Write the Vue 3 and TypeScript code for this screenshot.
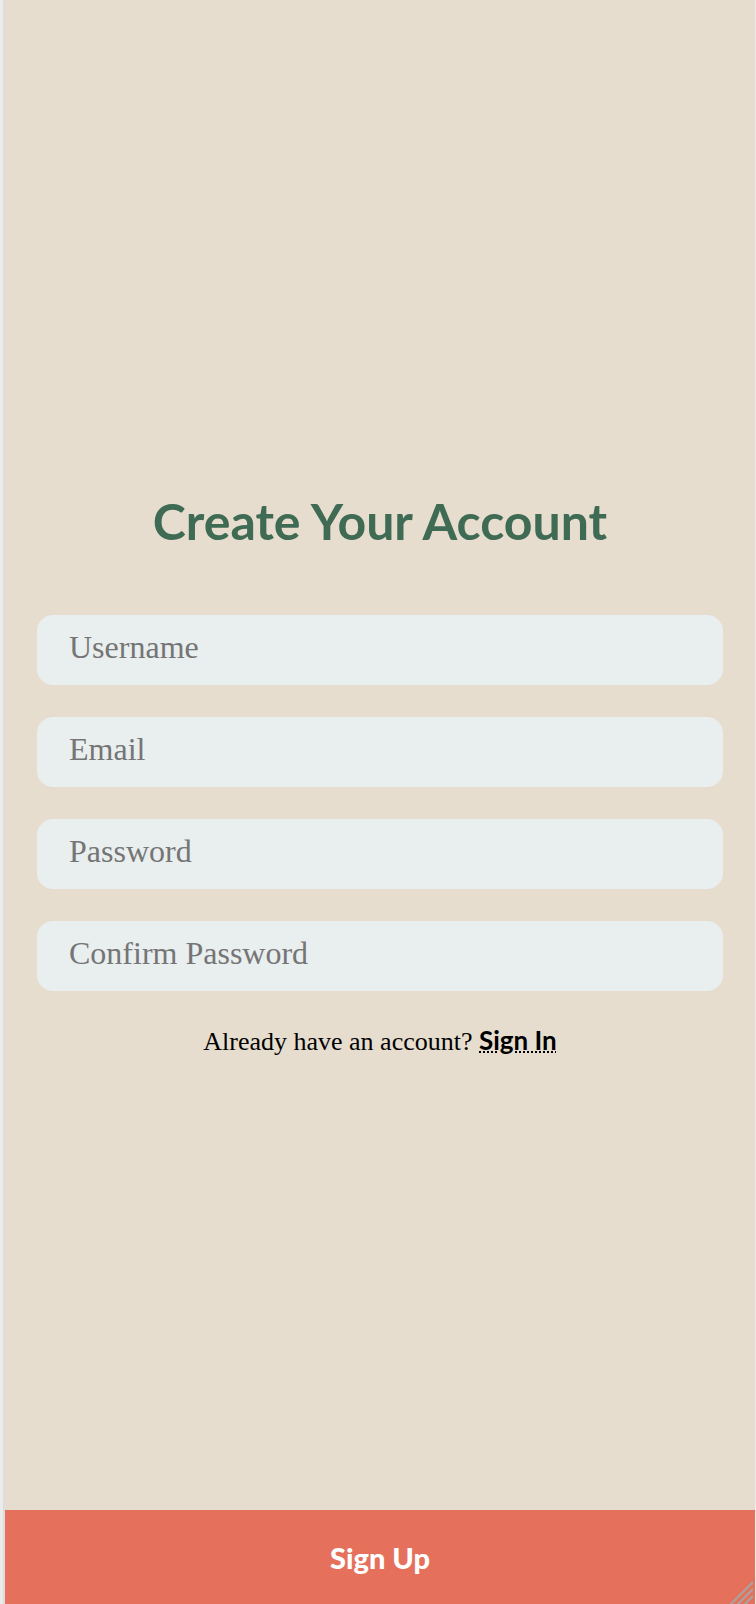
<script setup lang="ts">
import { reactive } from 'vue'

interface Field {
  id: 'username' | 'email' | 'password' | 'confirm'
  label: string
  type: string
}

const fields: Field[] = [
  { id: 'username', label: 'Username', type: 'text' },
  { id: 'email', label: 'Email', type: 'email' },
  { id: 'password', label: 'Password', type: 'password' },
  { id: 'confirm', label: 'Confirm Password', type: 'password' },
]

const values = reactive({ username: '', email: '', password: '', confirm: '' })
</script>

<template>
  <div class="frame">
    <form class="screen" @submit.prevent>
      <main class="content">
        <h1 class="title">Create Your Account</h1>
        <div class="fields">
          <input
            v-for="field in fields"
            :id="field.id"
            :key="field.id"
            v-model="values[field.id]"
            class="field"
            :type="field.type"
            :placeholder="field.label"
            :aria-label="field.label"
          />
        </div>
        <p class="prompt">Already have an account? <a class="link" href="#">Sign In</a></p>
      </main>
      <button class="submit" type="submit">Sign Up</button>
      <svg class="grip" width="24" height="24" viewBox="0 0 24 24" aria-hidden="true">
        <path d="M1 25 24 2M8 25 24 9M15 25l9-9" fill="none" stroke="#a9a3a0" stroke-width="2" />
      </svg>
    </form>
  </div>
</template>

<style>
body {
  margin: 0;
}
</style>

<style scoped>
.frame {
  box-sizing: border-box;
  min-height: 100vh;
  display: flex;
  padding-right: 1px;
  background: #ebebeb;
}

.screen {
  position: relative;
  flex: 1;
  display: flex;
  flex-direction: column;
  border-left: 2px solid #dddddd;
  margin-left: 3px;
  background: #e6ddce;
  font-family: "Liberation Serif", "Times New Roman", serif;
}

.content {
  flex: 1;
  display: flex;
  flex-direction: column;
  justify-content: center;
  gap: 32px;
  padding: 40px 32px 0;
}

.title {
  margin: 0 0 32px;
  color: #3f6b55;
  font: 700 50px/60px Lato, sans-serif;
  text-align: center;
}

.fields {
  display: flex;
  flex-direction: column;
  gap: 32px;
}

.field {
  box-sizing: border-box;
  width: 100%;
  height: 70px;
  padding: 0 32px 5px;
  border: 0;
  border-radius: 16px;
  background: #e9eeef;
  color: #222222;
  font: 32px "Liberation Serif", "Times New Roman", serif;
}

.field::placeholder {
  color: #757575;
  opacity: 1;
}

.prompt {
  margin: 0;
  color: #000000;
  font-size: 26px;
  line-height: 34px;
  text-align: center;
}

.link {
  color: inherit;
  font-family: Lato, sans-serif;
  font-weight: 700;
  text-decoration: underline dotted 2px;
}

.submit {
  height: 94px;
  padding: 0;
  border: 0;
  background: #e5715c;
  color: #ffffff;
  font: 900 29px Lato, sans-serif;
}

.grip {
  position: absolute;
  right: 2px;
  bottom: 0;
}
</style>
